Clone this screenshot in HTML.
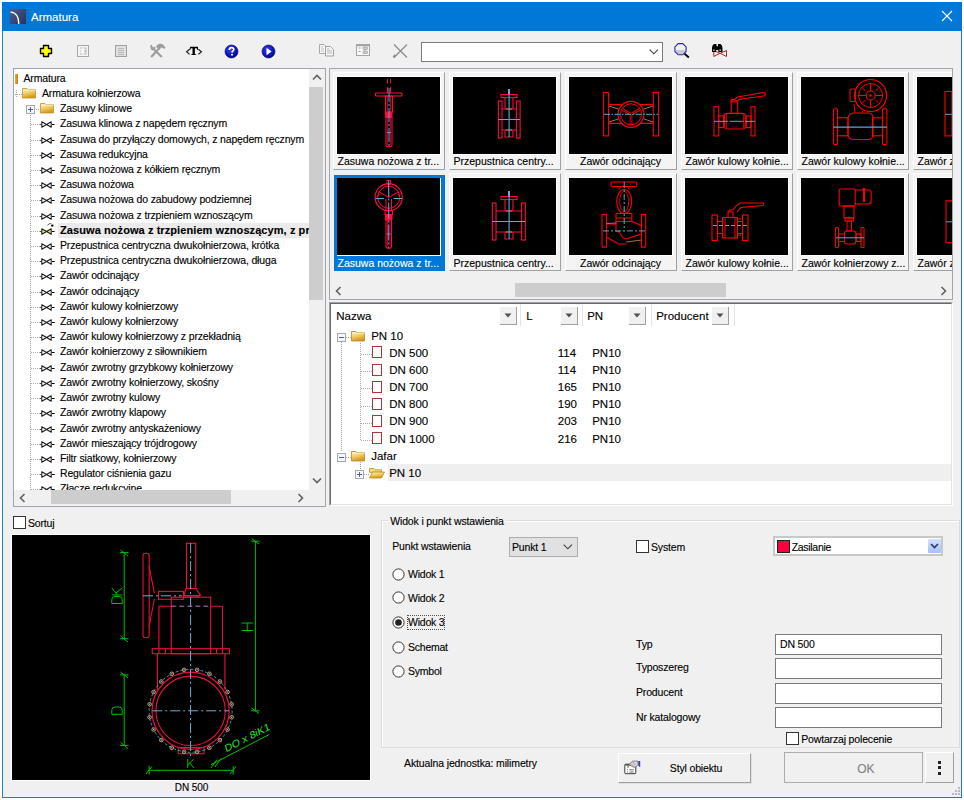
<!DOCTYPE html>
<html><head><meta charset="utf-8">
<style>
*{margin:0;padding:0;box-sizing:border-box}
html,body{width:964px;height:800px;overflow:hidden;background:#fff}
body{position:relative;font-family:"Liberation Sans",sans-serif;font-size:10.5px;color:#000}
.a{position:absolute}
svg{position:absolute;overflow:visible}
.t{position:absolute;white-space:nowrap;line-height:14px;-webkit-text-stroke:0.12px currentColor}
.box{position:absolute;background:#fff;border:1px solid #a0a4ac}
.g{background:#f0f0f0}
.th{position:absolute;background:#cdcdcd}
.sx{transform:scaleX(0.92);transform-origin:0 0}
</style></head><body>

<div class="a" style="left:2px;top:2px;width:960px;height:796px;background:#f0f0f0;border:1px solid #1c7bd4"></div>
<div class="a" style="left:2px;top:2px;width:960px;height:29px;background:#0078d7"></div>
<div class="a" style="left:10px;top:9px;width:16px;height:15px;background:linear-gradient(135deg,#4e5d8e,#27335f)"></div>
<svg style="left:10px;top:9px" width="16" height="15"><path d="M0.5 3.2 Q8.5 3.5 8.8 15" stroke="#fff" stroke-width="1.3" fill="none"/></svg>
<div class="t" style="left:31.0px;top:10px;font-size:11.5px;letter-spacing:0px;color:#fff">Armatura</div>
<svg style="left:941px;top:10px" width="12" height="12"><path d="M1 1L11 11M11 1L1 11" stroke="#fff" stroke-width="1.1"/></svg>
<svg style="left:39px;top:44px" width="14" height="14"><path d="M4.5 1.5h5v3h3v5h-3v3h-5v-3h-3v-5h3z" fill="#ffff00" stroke="#000" stroke-width="1.4" stroke-linejoin="round"/></svg>
<svg style="left:77px;top:45px" width="13" height="13"><rect x="0.5" y="0.5" width="11" height="11" fill="#f4f4f4" stroke="#a8a8a8"/><path d="M3 3h2M3 6h1M3 9h2M6.5 3h2.5v6h-2.5M8 5v2" stroke="#b0b0b0" stroke-width="0.9" fill="none"/></svg>
<svg style="left:115px;top:45px" width="13" height="13"><rect x="0.5" y="0.5" width="11" height="11" fill="#e0e0e0" stroke="#a0a0a0"/><path d="M3 3.5h6M3 5.5h6M3 7.5h6M3 9.5h6" stroke="#b8b8b8" stroke-width="1" fill="none"/></svg>
<svg style="left:0;top:0" width="1" height="1"><g fill="none" stroke="#9c9c9c" stroke-width="2.1" stroke-linecap="butt"><path d="M153 48.5L161.8 57"/><path d="M158.8 48.6L151.2 57"/></g><path d="M150.2 46.8q0.2-1.6 1.6-2.2l0.5 2 1.4 0.9 1.6-1q0.6 2.2-1 3.3-1.5 0.8-3 0.1z" fill="#9c9c9c"/><path d="M155.8 46.6l2.8-2.6q2.6-0.9 4.6 0.8l2.3 2.8-1.3 1.4-2.6-1.8-2.2 2.5z" fill="#9c9c9c"/></svg>
<svg style="left:0;top:0" width="1" height="1"><path d="M189.6 49.2L186.6 51.8L189.6 54.4M198.4 49.2L201.4 51.8L198.4 54.4" fill="none" stroke="#222" stroke-width="1.25"/><path d="M190.2 46.7h7.8v3.1h-0.9l-0.6-1.6h-1.6v5.7l1.3 0.5v0.7h-5v-0.7l1.3-0.5v-5.7h-1.6l-0.6 1.6h-0.9z" fill="#000"/></svg>
<svg style="left:224px;top:44px" width="15" height="15"><defs><radialGradient id="bg1" cx="0.4" cy="0.35" r="0.7"><stop offset="0" stop-color="#2f3dff"/><stop offset="1" stop-color="#00008a"/></radialGradient></defs><circle cx="7.5" cy="7.5" r="6.5" fill="url(#bg1)" stroke="#000060" stroke-width="0.6"/><path d="M5.3 6 Q5.3 3.6 7.6 3.6 Q9.8 3.6 9.8 5.6 Q9.8 6.8 8.3 7.4 L8.1 8.7" stroke="#fff" stroke-width="1.6" fill="none"/><circle cx="8" cy="10.8" r="1" fill="#fff"/></svg>
<svg style="left:261px;top:44px" width="15" height="15"><circle cx="7.5" cy="7.5" r="6.5" fill="url(#bg1)" stroke="#000060" stroke-width="0.6"/><path d="M5.5 3.8L10.6 7.5L5.5 11.2z" fill="#fff"/></svg>
<svg style="left:0;top:0" width="1" height="1"><path d="M319.5 44.5h4.5l2 2v7h-6.5z" fill="#f6f6f6" stroke="#a8a8a8"/><path d="M321 47h2M321 49h3M321 51h3" stroke="#c4c4c4"/><path d="M325.5 46.5h5l3 3v6.5h-8z" fill="#f6f6f6" stroke="#a0a0a0"/><path d="M327 49h2.5M327 51h5M327 53h5" stroke="#b8b8b8"/></svg>
<svg style="left:0;top:0" width="1" height="1"><rect x="356.5" y="44.5" width="13" height="11" fill="#f8f8f8" stroke="#a4a4a4"/><path d="M356.5 45.5h13" stroke="#a4a4a4" stroke-width="1.5"/><path d="M358.5 48h2M358.5 51.5h2" stroke="#a0a0a0"/><rect x="363" y="47" width="4.5" height="2.5" rx="0.8" fill="#cfcfcf" stroke="#9c9c9c" stroke-width="0.8"/><rect x="363" y="51" width="4.5" height="2.5" rx="0.8" fill="#cfcfcf" stroke="#9c9c9c" stroke-width="0.8"/></svg>
<svg style="left:392px;top:43px" width="17" height="16"><path d="M2 1.5L15 14.5M15 1.5L3 13.5" stroke="#8c8c8c" stroke-width="1.3" fill="none"/><path d="M1.5 14.5l2-2.5" stroke="#8c8c8c" stroke-width="2.2"/></svg>
<div class="a" style="left:421px;top:42px;width:242px;height:20px;background:#fff;border:1px solid #7a7a7a"></div>
<svg style="left:649px;top:49px" width="10" height="6"><path d="M0.7 0.7L4.8 4.8L8.9 0.7" stroke="#404040" stroke-width="1.1" fill="none"/></svg>
<svg style="left:0;top:0" width="1" height="1"><path d="M676 50h9.5v1.2q-1 3.7-4.7 3.7t-4.8-3.7z" fill="#c8c8dc"/><path d="M678.2 43.6h4.6l3.3 3.3v4.6l-3.3 3.3h-4.6l-3.3-3.3v-4.6z" fill="none" stroke="#2a2aa8" stroke-width="1.1"/><path d="M684.6 53.8L688.8 57.6" stroke="#000" stroke-width="2"/></svg>
<svg style="left:0;top:0" width="1" height="1"><path d="M713.8 50.5V56.5L720 53.3ZM726.5 50.5V56.5L720.3 53.3Z" fill="none" stroke="#b02424" stroke-width="1"/><path d="M712 48q0-3 2-4h2.5v2.2h1.5v-2.2h2.5q2 1 2 4v4h-4.2v-2h-2.2v2h-4.1z" fill="#000"/><path d="M713.2 49.5h1.3v1.2h-1.3zM719.5 49.5h1.3v1.2h-1.3z" fill="#fff"/></svg>
<div class="box" style="left:13px;top:68px;width:313px;height:439px"></div>
<div class="a" style="left:14px;top:69px;width:295px;height:421px;overflow:hidden">
<svg style="left:0;top:0" width="0" height="0"><defs><linearGradient id="fg" x1="0" y1="0" x2="0.35" y2="1"><stop offset="0" stop-color="#fff4c0"/><stop offset="0.5" stop-color="#f4d070"/><stop offset="1" stop-color="#d49a1c"/></linearGradient></defs></svg>
<div class="a" style="left:16.0px;top:44.0px;width:1px;height:382.0px;background:repeating-linear-gradient(#a8a8a8 0 1px,transparent 1px 2px)"></div>
<div class="a" style="left:1px;top:5px;width:3px;height:10px;background:linear-gradient(90deg,#e8b040,#c08010)"></div>
<div class="t" style="left:9.5px;top:2px;font-size:10.5px;letter-spacing:-0.16px;">Armatura</div>
<div class="a" style="left:1.0px;top:25.0px;width:7.0px;height:1px;background:repeating-linear-gradient(90deg,#a8a8a8 0 1px,transparent 1px 2px)"></div>
<div class="a" style="left:2.0px;top:21.0px;width:1px;height:8.0px;background:repeating-linear-gradient(#a8a8a8 0 1px,transparent 1px 2px)"></div>
<svg style="left:8.0px;top:18.0px" width="15" height="12"><path d="M0.5 1.5h4.5l1.2 1.3h7.3v8.2h-13z" fill="url(#fg)" stroke="#c09030" stroke-width="0.8"/><path d="M1 3.3h12.5" stroke="#fff8d8" stroke-width="0.8"/></svg>
<div class="t" style="left:28.0px;top:17px;font-size:10.5px;letter-spacing:-0.16px;">Armatura kołnierzowa</div>
<div class="a" style="left:20.0px;top:40.0px;width:6.0px;height:1px;background:repeating-linear-gradient(90deg,#a8a8a8 0 1px,transparent 1px 2px)"></div>
<svg style="left:26.0px;top:33.0px" width="15" height="12"><path d="M0.5 1.5h4.5l1.2 1.3h7.3v8.2h-13z" fill="url(#fg)" stroke="#c09030" stroke-width="0.8"/><path d="M1 3.3h12.5" stroke="#fff8d8" stroke-width="0.8"/></svg>
<svg style="left:12.0px;top:36.0px" width="9" height="9"><rect x="0.5" y="0.5" width="8" height="8" fill="#f6f6fa" stroke="#a8aab0"/><path d="M2 4.5h5" stroke="#4a5fb0" stroke-width="1"/><path d="M4.5 2v5" stroke="#4a5fb0" stroke-width="1"/></svg>
<div class="t" style="left:46.0px;top:32px;font-size:10.5px;letter-spacing:-0.16px;">Zasuwy klinowe</div>
<div class="a" style="left:17.0px;top:55.0px;width:9.0px;height:1px;background:repeating-linear-gradient(90deg,#a8a8a8 0 1px,transparent 1px 2px)"></div>
<svg style="left:26.0px;top:52.0px" width="16" height="8"><path d="M1.8 0.8L6.6 3.5L1.8 6.2z M11.2 0.8L6.6 3.5L11.2 6.2z" fill="#fff" stroke="#1a1a1a" stroke-width="1.05" stroke-linejoin="round"/><path d="M0.3 3.5h1M12 3.5h2.6" stroke="#000" stroke-width="1"/></svg>
<div class="t" style="left:46.0px;top:47px;font-size:10.5px;letter-spacing:-0.16px;">Zasuwa klinowa z napędem ręcznym</div>
<div class="a" style="left:17.0px;top:71.0px;width:9.0px;height:1px;background:repeating-linear-gradient(90deg,#a8a8a8 0 1px,transparent 1px 2px)"></div>
<svg style="left:26.0px;top:68.0px" width="16" height="8"><path d="M1.8 0.8L6.6 3.5L1.8 6.2z M11.2 0.8L6.6 3.5L11.2 6.2z" fill="#fff" stroke="#1a1a1a" stroke-width="1.05" stroke-linejoin="round"/><path d="M0.3 3.5h1M12 3.5h2.6" stroke="#000" stroke-width="1"/></svg>
<div class="t" style="left:46.0px;top:63px;font-size:10.5px;letter-spacing:-0.16px;">Zasuwa do przyłączy domowych, z napędem ręcznym</div>
<div class="a" style="left:17.0px;top:86.0px;width:9.0px;height:1px;background:repeating-linear-gradient(90deg,#a8a8a8 0 1px,transparent 1px 2px)"></div>
<svg style="left:26.0px;top:83.0px" width="16" height="8"><path d="M1.8 0.8L6.6 3.5L1.8 6.2z M11.2 0.8L6.6 3.5L11.2 6.2z" fill="#fff" stroke="#1a1a1a" stroke-width="1.05" stroke-linejoin="round"/><path d="M0.3 3.5h1M12 3.5h2.6" stroke="#000" stroke-width="1"/></svg>
<div class="t" style="left:46.0px;top:78px;font-size:10.5px;letter-spacing:-0.16px;">Zasuwa redukcyjna</div>
<div class="a" style="left:17.0px;top:101.0px;width:9.0px;height:1px;background:repeating-linear-gradient(90deg,#a8a8a8 0 1px,transparent 1px 2px)"></div>
<svg style="left:26.0px;top:98.0px" width="16" height="8"><path d="M1.8 0.8L6.6 3.5L1.8 6.2z M11.2 0.8L6.6 3.5L11.2 6.2z" fill="#fff" stroke="#1a1a1a" stroke-width="1.05" stroke-linejoin="round"/><path d="M0.3 3.5h1M12 3.5h2.6" stroke="#000" stroke-width="1"/></svg>
<div class="t" style="left:46.0px;top:93px;font-size:10.5px;letter-spacing:-0.16px;">Zasuwa nożowa z kółkiem ręcznym</div>
<div class="a" style="left:17.0px;top:116.0px;width:9.0px;height:1px;background:repeating-linear-gradient(90deg,#a8a8a8 0 1px,transparent 1px 2px)"></div>
<svg style="left:26.0px;top:113.0px" width="16" height="8"><path d="M1.8 0.8L6.6 3.5L1.8 6.2z M11.2 0.8L6.6 3.5L11.2 6.2z" fill="#fff" stroke="#1a1a1a" stroke-width="1.05" stroke-linejoin="round"/><path d="M0.3 3.5h1M12 3.5h2.6" stroke="#000" stroke-width="1"/></svg>
<div class="t" style="left:46.0px;top:108px;font-size:10.5px;letter-spacing:-0.16px;">Zasuwa nożowa</div>
<div class="a" style="left:17.0px;top:131.0px;width:9.0px;height:1px;background:repeating-linear-gradient(90deg,#a8a8a8 0 1px,transparent 1px 2px)"></div>
<svg style="left:26.0px;top:128.0px" width="16" height="8"><path d="M1.8 0.8L6.6 3.5L1.8 6.2z M11.2 0.8L6.6 3.5L11.2 6.2z" fill="#fff" stroke="#1a1a1a" stroke-width="1.05" stroke-linejoin="round"/><path d="M0.3 3.5h1M12 3.5h2.6" stroke="#000" stroke-width="1"/></svg>
<div class="t" style="left:46.0px;top:123px;font-size:10.5px;letter-spacing:-0.16px;">Zasuwa nożowa do zabudowy podziemnej</div>
<div class="a" style="left:17.0px;top:147.0px;width:9.0px;height:1px;background:repeating-linear-gradient(90deg,#a8a8a8 0 1px,transparent 1px 2px)"></div>
<svg style="left:26.0px;top:144.0px" width="16" height="8"><path d="M1.8 0.8L6.6 3.5L1.8 6.2z M11.2 0.8L6.6 3.5L11.2 6.2z" fill="#fff" stroke="#1a1a1a" stroke-width="1.05" stroke-linejoin="round"/><path d="M0.3 3.5h1M12 3.5h2.6" stroke="#000" stroke-width="1"/></svg>
<div class="t" style="left:46.0px;top:139px;font-size:10.5px;letter-spacing:-0.16px;">Zasuwa nożowa z trzpieniem wznoszącym</div>
<div class="a" style="left:17.0px;top:162.0px;width:9.0px;height:1px;background:repeating-linear-gradient(90deg,#a8a8a8 0 1px,transparent 1px 2px)"></div>
<div class="a" style="left:44.0px;top:154px;width:260px;height:15px;background:#ebebeb"></div>
<svg style="left:26.0px;top:159.0px" width="16" height="8"><path d="M1.8 0.8L6.6 3.5L1.8 6.2z M11.2 0.8L6.6 3.5L11.2 6.2z" fill="#f0f040" stroke="#1a1a1a" stroke-width="1.05" stroke-linejoin="round"/><path d="M0.3 3.5h1M12 3.5h2.6" stroke="#000" stroke-width="1"/></svg><svg style="left:31.0px;top:153.0px" width="10" height="8"><path d="M2.5 3.5Q4 0.6 6.5 1.8" stroke="#404040" stroke-width="0.9" fill="none"/><circle cx="7.3" cy="3.6" r="1.2" fill="#000"/></svg>
<div class="t" style="left:46.0px;top:154px;font-size:11px;letter-spacing:0.08px;font-weight:bold">Zasuwa nożowa z trzpieniem wznoszącym, z przekładnią</div>
<div class="a" style="left:17.0px;top:177.0px;width:9.0px;height:1px;background:repeating-linear-gradient(90deg,#a8a8a8 0 1px,transparent 1px 2px)"></div>
<svg style="left:26.0px;top:174.0px" width="16" height="8"><path d="M1.8 0.8L6.6 3.5L1.8 6.2z M11.2 0.8L6.6 3.5L11.2 6.2z" fill="#fff" stroke="#1a1a1a" stroke-width="1.05" stroke-linejoin="round"/><path d="M0.3 3.5h1M12 3.5h2.6" stroke="#000" stroke-width="1"/></svg>
<div class="t" style="left:46.0px;top:169px;font-size:10.5px;letter-spacing:-0.16px;">Przepustnica centryczna dwukołnierzowa, krótka</div>
<div class="a" style="left:17.0px;top:192.0px;width:9.0px;height:1px;background:repeating-linear-gradient(90deg,#a8a8a8 0 1px,transparent 1px 2px)"></div>
<svg style="left:26.0px;top:189.0px" width="16" height="8"><path d="M1.8 0.8L6.6 3.5L1.8 6.2z M11.2 0.8L6.6 3.5L11.2 6.2z" fill="#fff" stroke="#1a1a1a" stroke-width="1.05" stroke-linejoin="round"/><path d="M0.3 3.5h1M12 3.5h2.6" stroke="#000" stroke-width="1"/></svg>
<div class="t" style="left:46.0px;top:184px;font-size:10.5px;letter-spacing:-0.16px;">Przepustnica centryczna dwukołnierzowa, długa</div>
<div class="a" style="left:17.0px;top:207.0px;width:9.0px;height:1px;background:repeating-linear-gradient(90deg,#a8a8a8 0 1px,transparent 1px 2px)"></div>
<svg style="left:26.0px;top:204.0px" width="16" height="8"><path d="M1.8 0.8L6.6 3.5L1.8 6.2z M11.2 0.8L6.6 3.5L11.2 6.2z" fill="#fff" stroke="#1a1a1a" stroke-width="1.05" stroke-linejoin="round"/><path d="M0.3 3.5h1M12 3.5h2.6" stroke="#000" stroke-width="1"/></svg>
<div class="t" style="left:46.0px;top:199px;font-size:10.5px;letter-spacing:-0.16px;">Zawór odcinający</div>
<div class="a" style="left:17.0px;top:223.0px;width:9.0px;height:1px;background:repeating-linear-gradient(90deg,#a8a8a8 0 1px,transparent 1px 2px)"></div>
<svg style="left:26.0px;top:220.0px" width="16" height="8"><path d="M1.8 0.8L6.6 3.5L1.8 6.2z M11.2 0.8L6.6 3.5L11.2 6.2z" fill="#fff" stroke="#1a1a1a" stroke-width="1.05" stroke-linejoin="round"/><path d="M0.3 3.5h1M12 3.5h2.6" stroke="#000" stroke-width="1"/></svg>
<div class="t" style="left:46.0px;top:215px;font-size:10.5px;letter-spacing:-0.16px;">Zawór odcinający</div>
<div class="a" style="left:17.0px;top:238.0px;width:9.0px;height:1px;background:repeating-linear-gradient(90deg,#a8a8a8 0 1px,transparent 1px 2px)"></div>
<svg style="left:26.0px;top:235.0px" width="16" height="8"><path d="M1.8 0.8L6.6 3.5L1.8 6.2z M11.2 0.8L6.6 3.5L11.2 6.2z" fill="#fff" stroke="#1a1a1a" stroke-width="1.05" stroke-linejoin="round"/><path d="M0.3 3.5h1M12 3.5h2.6" stroke="#000" stroke-width="1"/></svg>
<div class="t" style="left:46.0px;top:230px;font-size:10.5px;letter-spacing:-0.16px;">Zawór kulowy kołnierzowy</div>
<div class="a" style="left:17.0px;top:253.0px;width:9.0px;height:1px;background:repeating-linear-gradient(90deg,#a8a8a8 0 1px,transparent 1px 2px)"></div>
<svg style="left:26.0px;top:250.0px" width="16" height="8"><path d="M1.8 0.8L6.6 3.5L1.8 6.2z M11.2 0.8L6.6 3.5L11.2 6.2z" fill="#fff" stroke="#1a1a1a" stroke-width="1.05" stroke-linejoin="round"/><path d="M0.3 3.5h1M12 3.5h2.6" stroke="#000" stroke-width="1"/></svg>
<div class="t" style="left:46.0px;top:245px;font-size:10.5px;letter-spacing:-0.16px;">Zawór kulowy kołnierzowy</div>
<div class="a" style="left:17.0px;top:268.0px;width:9.0px;height:1px;background:repeating-linear-gradient(90deg,#a8a8a8 0 1px,transparent 1px 2px)"></div>
<svg style="left:26.0px;top:265.0px" width="16" height="8"><path d="M1.8 0.8L6.6 3.5L1.8 6.2z M11.2 0.8L6.6 3.5L11.2 6.2z" fill="#fff" stroke="#1a1a1a" stroke-width="1.05" stroke-linejoin="round"/><path d="M0.3 3.5h1M12 3.5h2.6" stroke="#000" stroke-width="1"/></svg>
<div class="t" style="left:46.0px;top:260px;font-size:10.5px;letter-spacing:-0.16px;">Zawór kulowy kołnierzowy z przekładnią</div>
<div class="a" style="left:17.0px;top:283.0px;width:9.0px;height:1px;background:repeating-linear-gradient(90deg,#a8a8a8 0 1px,transparent 1px 2px)"></div>
<svg style="left:26.0px;top:280.0px" width="16" height="8"><path d="M1.8 0.8L6.6 3.5L1.8 6.2z M11.2 0.8L6.6 3.5L11.2 6.2z" fill="#fff" stroke="#1a1a1a" stroke-width="1.05" stroke-linejoin="round"/><path d="M0.3 3.5h1M12 3.5h2.6" stroke="#000" stroke-width="1"/></svg>
<div class="t" style="left:46.0px;top:275px;font-size:10.5px;letter-spacing:-0.16px;">Zawór kołnierzowy z siłownikiem</div>
<div class="a" style="left:17.0px;top:299.0px;width:9.0px;height:1px;background:repeating-linear-gradient(90deg,#a8a8a8 0 1px,transparent 1px 2px)"></div>
<svg style="left:26.0px;top:296.0px" width="16" height="8"><path d="M1.8 0.8L6.6 3.5L1.8 6.2z M11.2 0.8L6.6 3.5L11.2 6.2z" fill="#fff" stroke="#1a1a1a" stroke-width="1.05" stroke-linejoin="round"/><path d="M0.3 3.5h1M12 3.5h2.6" stroke="#000" stroke-width="1"/></svg>
<div class="t" style="left:46.0px;top:291px;font-size:10.5px;letter-spacing:-0.16px;">Zawór zwrotny grzybkowy kołnierzowy</div>
<div class="a" style="left:17.0px;top:314.0px;width:9.0px;height:1px;background:repeating-linear-gradient(90deg,#a8a8a8 0 1px,transparent 1px 2px)"></div>
<svg style="left:26.0px;top:311.0px" width="16" height="8"><path d="M1.8 0.8L6.6 3.5L1.8 6.2z M11.2 0.8L6.6 3.5L11.2 6.2z" fill="#fff" stroke="#1a1a1a" stroke-width="1.05" stroke-linejoin="round"/><path d="M0.3 3.5h1M12 3.5h2.6" stroke="#000" stroke-width="1"/></svg>
<div class="t" style="left:46.0px;top:306px;font-size:10.5px;letter-spacing:-0.16px;">Zawór zwrotny kołnierzowy, skośny</div>
<div class="a" style="left:17.0px;top:329.0px;width:9.0px;height:1px;background:repeating-linear-gradient(90deg,#a8a8a8 0 1px,transparent 1px 2px)"></div>
<svg style="left:26.0px;top:326.0px" width="16" height="8"><path d="M1.8 0.8L6.6 3.5L1.8 6.2z M11.2 0.8L6.6 3.5L11.2 6.2z" fill="#fff" stroke="#1a1a1a" stroke-width="1.05" stroke-linejoin="round"/><path d="M0.3 3.5h1M12 3.5h2.6" stroke="#000" stroke-width="1"/></svg>
<div class="t" style="left:46.0px;top:321px;font-size:10.5px;letter-spacing:-0.16px;">Zawór zwrotny kulowy</div>
<div class="a" style="left:17.0px;top:344.0px;width:9.0px;height:1px;background:repeating-linear-gradient(90deg,#a8a8a8 0 1px,transparent 1px 2px)"></div>
<svg style="left:26.0px;top:341.0px" width="16" height="8"><path d="M1.8 0.8L6.6 3.5L1.8 6.2z M11.2 0.8L6.6 3.5L11.2 6.2z" fill="#fff" stroke="#1a1a1a" stroke-width="1.05" stroke-linejoin="round"/><path d="M0.3 3.5h1M12 3.5h2.6" stroke="#000" stroke-width="1"/></svg>
<div class="t" style="left:46.0px;top:336px;font-size:10.5px;letter-spacing:-0.16px;">Zawór zwrotny klapowy</div>
<div class="a" style="left:17.0px;top:360.0px;width:9.0px;height:1px;background:repeating-linear-gradient(90deg,#a8a8a8 0 1px,transparent 1px 2px)"></div>
<svg style="left:26.0px;top:357.0px" width="16" height="8"><path d="M1.8 0.8L6.6 3.5L1.8 6.2z M11.2 0.8L6.6 3.5L11.2 6.2z" fill="#fff" stroke="#1a1a1a" stroke-width="1.05" stroke-linejoin="round"/><path d="M0.3 3.5h1M12 3.5h2.6" stroke="#000" stroke-width="1"/></svg>
<div class="t" style="left:46.0px;top:352px;font-size:10.5px;letter-spacing:-0.16px;">Zawór zwrotny antyskażeniowy</div>
<div class="a" style="left:17.0px;top:375.0px;width:9.0px;height:1px;background:repeating-linear-gradient(90deg,#a8a8a8 0 1px,transparent 1px 2px)"></div>
<svg style="left:26.0px;top:372.0px" width="16" height="8"><path d="M1.8 0.8L6.6 3.5L1.8 6.2z M11.2 0.8L6.6 3.5L11.2 6.2z" fill="#fff" stroke="#1a1a1a" stroke-width="1.05" stroke-linejoin="round"/><path d="M0.3 3.5h1M12 3.5h2.6" stroke="#000" stroke-width="1"/></svg>
<div class="t" style="left:46.0px;top:367px;font-size:10.5px;letter-spacing:-0.16px;">Zawór mieszający trójdrogowy</div>
<div class="a" style="left:17.0px;top:390.0px;width:9.0px;height:1px;background:repeating-linear-gradient(90deg,#a8a8a8 0 1px,transparent 1px 2px)"></div>
<svg style="left:26.0px;top:387.0px" width="16" height="8"><path d="M1.8 0.8L6.6 3.5L1.8 6.2z M11.2 0.8L6.6 3.5L11.2 6.2z" fill="#fff" stroke="#1a1a1a" stroke-width="1.05" stroke-linejoin="round"/><path d="M0.3 3.5h1M12 3.5h2.6" stroke="#000" stroke-width="1"/></svg>
<div class="t" style="left:46.0px;top:382px;font-size:10.5px;letter-spacing:-0.16px;">Filtr siatkowy, kołnierzowy</div>
<div class="a" style="left:17.0px;top:405.0px;width:9.0px;height:1px;background:repeating-linear-gradient(90deg,#a8a8a8 0 1px,transparent 1px 2px)"></div>
<svg style="left:26.0px;top:402.0px" width="16" height="8"><path d="M1.8 0.8L6.6 3.5L1.8 6.2z M11.2 0.8L6.6 3.5L11.2 6.2z" fill="#fff" stroke="#1a1a1a" stroke-width="1.05" stroke-linejoin="round"/><path d="M0.3 3.5h1M12 3.5h2.6" stroke="#000" stroke-width="1"/></svg>
<div class="t" style="left:46.0px;top:397px;font-size:10.5px;letter-spacing:-0.16px;">Regulator ciśnienia gazu</div>
<div class="a" style="left:17.0px;top:420.0px;width:9.0px;height:1px;background:repeating-linear-gradient(90deg,#a8a8a8 0 1px,transparent 1px 2px)"></div>
<svg style="left:26.0px;top:417.0px" width="16" height="8"><path d="M1.8 0.8L6.6 3.5L1.8 6.2z M11.2 0.8L6.6 3.5L11.2 6.2z" fill="#fff" stroke="#1a1a1a" stroke-width="1.05" stroke-linejoin="round"/><path d="M0.3 3.5h1M12 3.5h2.6" stroke="#000" stroke-width="1"/></svg>
<div class="t" style="left:46.0px;top:412px;font-size:10.5px;letter-spacing:-0.16px;">Złącze redukcyjne</div>
</div>
<div class="a g" style="left:309px;top:69px;width:16px;height:437px"></div>
<div class="th" style="left:309px;top:87px;width:14px;height:213px"></div>
<svg style="left:312px;top:74px" width="10" height="7"><path d="M1 5.5L5 1.5L9 5.5" stroke="#606060" stroke-width="1.6" fill="none"/></svg>
<svg style="left:312px;top:477px" width="10" height="7"><path d="M1 1.5L5 5.5L9 1.5" stroke="#606060" stroke-width="1.6" fill="none"/></svg>
<div class="a g" style="left:14px;top:490px;width:295px;height:16px"></div>
<div class="th" style="left:51px;top:490px;width:180px;height:14px"></div>
<svg style="left:19px;top:493px" width="7" height="10"><path d="M5.5 1L1.5 5L5.5 9" stroke="#606060" stroke-width="1.6" fill="none"/></svg>
<svg style="left:297px;top:493px" width="7" height="10"><path d="M1.5 1L5.5 5L1.5 9" stroke="#606060" stroke-width="1.6" fill="none"/></svg>
<div class="box" style="left:329px;top:68px;width:624px;height:232px"></div>
<div class="a" style="left:330px;top:69px;width:622px;height:214px;overflow:hidden">
<div class="a" style="left:0;top:0;width:622px;height:214px;background:#f0f0f0"></div>
<div class="a" style="left:3px;top:3px;width:112px;height:98px;border-top:1px solid #fff;border-left:1px solid #fff;border-right:1px solid #a0a0a0;border-bottom:1px solid #a0a0a0;background:#f4f4f4"></div>
<div class="a" style="left:6px;top:7px;width:105px;height:79px;background:#fff"></div>
<svg style="left:7px;top:8px;background:#000;overflow:hidden" width="103" height="77"><rect x="38.5" y="16" width="26.5" height="3" rx="0.8" fill="none" stroke="#ff0a3c" stroke-width="1.1"/>
<rect x="48.5" y="19" width="7" height="16" fill="none" stroke="#ff0a3c" stroke-width="1.1"/>
<path d="M50.3 19v16M53.7 19v16" stroke="#ff0a3c" stroke-width="0.8"/>
<rect x="48" y="35" width="7.5" height="5.5" fill="#ff0a3c"/>
<path d="M49 40.5h6v27.5q0 1.8-3 1.8t-3-1.8z" fill="none" stroke="#ff0a3c" stroke-width="1.1"/>
<path d="M50.6 41v27M53.4 41v27" stroke="#ff0a3c" stroke-width="0.7"/>
<path d="M50.5 2v4.5M53.5 2v4.5M50.5 10v6M53.5 10v6" stroke="#ff0a3c" stroke-width="1"/>
<path d="M52 11V69" stroke="#5aa8d8" stroke-width="1" stroke-dasharray="14 2 2 2"/>
<path d="M50 55.5h4" stroke="#5aa8d8" stroke-width="0.9"/></svg>
<div class="t" style="left:7.5px;top:85px;font-size:10.5px;letter-spacing:0px;color:#000">Zasuwa nożowa z tr...</div>
<div class="a" style="left:119px;top:3px;width:112px;height:98px;border-top:1px solid #fff;border-left:1px solid #fff;border-right:1px solid #a0a0a0;border-bottom:1px solid #a0a0a0;background:#f4f4f4"></div>
<div class="a" style="left:122px;top:7px;width:105px;height:79px;background:#fff"></div>
<svg style="left:123px;top:8px;background:#000;overflow:hidden" width="103" height="77"><rect x="45.3" y="24" width="3.7" height="37" fill="none" stroke="#ff0a3c" stroke-width="1.1"/>
<rect x="63.4" y="24" width="3.7" height="37" fill="none" stroke="#ff0a3c" stroke-width="1.1"/>
<path d="M49.0 32H63.4M49.0 53H63.4" stroke="#ff0a3c" stroke-width="1.1"/>
<path d="M52 20.5V32M60 20.5V32M52 53v7h8v-7" fill="none" stroke="#ff0a3c" stroke-width="1.1"/>
<rect x="48" y="17.5" width="16" height="3" fill="none" stroke="#ff0a3c" stroke-width="1.1"/>
<path d="M56 12v5.5" stroke="#e080c0" stroke-width="2"/>
<path d="M53 32h6M53 53h6" stroke="#c89050" stroke-width="1"/>
<path d="M56.1 12V60M45.3 42.5H67.1" stroke="#5aa8d8" stroke-width="1.1"/></svg>
<div class="t" style="left:123.5px;top:85px;font-size:10.5px;letter-spacing:0px;color:#000">Przepustnica centry...</div>
<div class="a" style="left:235px;top:3px;width:112px;height:98px;border-top:1px solid #fff;border-left:1px solid #fff;border-right:1px solid #a0a0a0;border-bottom:1px solid #a0a0a0;background:#f4f4f4"></div>
<div class="a" style="left:238px;top:7px;width:105px;height:79px;background:#fff"></div>
<svg style="left:239px;top:8px;background:#000;overflow:hidden" width="103" height="77"><rect x="34.6" y="15.5" width="5" height="43.4" fill="none" stroke="#ff0000" stroke-width="1.1"/>
<rect x="84.3" y="15.5" width="5.2" height="43.4" fill="none" stroke="#ff0000" stroke-width="1.1"/>
<path d="M39.6 27.6H84.3M39.6 46.4H84.3" stroke="#ff0000" stroke-width="1.1"/>
<path d="M40 29l12 4M40 45l12-4M84 29l-12 4M84 45l-12-4" stroke="#c89050" stroke-width="0.8"/>
<circle cx="62" cy="37.3" r="13" fill="#000" stroke="#ff0000" stroke-width="1.2"/>
<circle cx="62" cy="37.3" r="10.5" fill="none" stroke="#ff0000" stroke-width="1"/>
<path d="M62 37.3V47M62 37.3L53.5 32.5M62 37.3L70.5 32.5" stroke="#ff0000" stroke-width="2.6"/>
<path d="M62 37.3V47M62 37.3L53.5 32.5M62 37.3L70.5 32.5" stroke="#000" stroke-width="0.9"/>
<path d="M35 37.3H89" stroke="#5aa8d8" stroke-width="1" stroke-dasharray="6 1.5 1.5 1.5"/></svg>
<div class="t" style="left:238.5px;top:85px;font-size:10.5px;letter-spacing:-0.05px;width:104px;text-align:center;color:#000">Zawór odcinający</div>
<div class="a" style="left:351px;top:3px;width:112px;height:98px;border-top:1px solid #fff;border-left:1px solid #fff;border-right:1px solid #a0a0a0;border-bottom:1px solid #a0a0a0;background:#f4f4f4"></div>
<div class="a" style="left:354px;top:7px;width:105px;height:79px;background:#fff"></div>
<svg style="left:355px;top:8px;background:#000;overflow:hidden" width="103" height="77"><rect x="29" y="29.7" width="4.7" height="29.2" fill="none" stroke="#ff0000" stroke-width="1.1"/>
<rect x="66" y="29.7" width="4" height="29.2" fill="none" stroke="#ff0000" stroke-width="1.1"/>
<rect x="33.7" y="38.9" width="5" height="11.6" fill="none" stroke="#ff0000" stroke-width="1.1"/>
<rect x="61.3" y="38.9" width="4.7" height="11.6" fill="none" stroke="#ff0000" stroke-width="1.1"/>
<rect x="39.6" y="36.4" width="20.6" height="15.6" rx="2.5" fill="none" stroke="#ff0000" stroke-width="1.1"/>
<path d="M41.5 37v14M58.5 37v14" stroke="#ff0000" stroke-width="0.7"/>
<rect x="46.2" y="23.9" width="6.5" height="12.5" fill="none" stroke="#ff0000" stroke-width="1.1"/>
<path d="M46.5 22.5h3l3-2.5 26-4.5q2 0 2 1.5t-2 2l-25 3.5l-1.5 2.5h-5.5q-1-1.5 0-2.5z" fill="none" stroke="#ff0000" stroke-width="1.1"/>
<path d="M29 44.3H70" stroke="#5aa8d8" stroke-width="1" stroke-dasharray="14 1.5"/></svg>
<div class="t" style="left:355.5px;top:85px;font-size:10.5px;letter-spacing:0px;color:#000">Zawór kulowy kołnie...</div>
<div class="a" style="left:467px;top:3px;width:112px;height:98px;border-top:1px solid #fff;border-left:1px solid #fff;border-right:1px solid #a0a0a0;border-bottom:1px solid #a0a0a0;background:#f4f4f4"></div>
<div class="a" style="left:470px;top:7px;width:105px;height:79px;background:#fff"></div>
<svg style="left:471px;top:8px;background:#000;overflow:hidden" width="103" height="77"><rect x="32.5" y="31.8" width="4" height="35.8" rx="1" fill="none" stroke="#ff0000" stroke-width="1.1"/>
<rect x="81.5" y="31.8" width="4.4" height="35.8" rx="1" fill="none" stroke="#ff0000" stroke-width="1.1"/>
<rect x="36.5" y="40.8" width="10.5" height="18" fill="none" stroke="#ff0000" stroke-width="1.1"/>
<rect x="71.5" y="40.8" width="10" height="18" fill="none" stroke="#ff0000" stroke-width="1.1"/>
<path d="M47 41q1-5 7-5h13q5 0 5 5v17q0 4.5-5 4.5H54q-7 0-7-4.5z" fill="none" stroke="#ff0000" stroke-width="1.1"/>
<path d="M54 36l-1-9M61 36l1-2" stroke="#ff0000" stroke-width="1"/>
<circle cx="69.6" cy="18.5" r="16" fill="#000" stroke="#ff0000" stroke-width="1.2"/>
<circle cx="69.6" cy="18.5" r="12" fill="none" stroke="#ff0000" stroke-width="1"/>
<circle cx="69.6" cy="18.5" r="4.5" fill="none" stroke="#ff0000" stroke-width="1.1"/>
<circle cx="69.6" cy="18.5" r="1.2" fill="#ff0000"/>
<path d="M69.6 6.5v7.5M69.6 23v7.5M57.6 18.5h7.5M74 18.5h7.5M61 10.5l4 4M74 22.5l4 4M61 26.5l4-4M78 10.5l-4 4" stroke="#ff0000" stroke-width="1"/>
<rect x="49" y="12" width="5.5" height="12.5" rx="1" fill="none" stroke="#ff0000" stroke-width="1.1"/>
<path d="M32.5 50.1H86" stroke="#5aa8d8" stroke-width="1.3"/></svg>
<div class="t" style="left:471.5px;top:85px;font-size:10.5px;letter-spacing:0px;color:#000">Zawór kulowy kołnie...</div>
<div class="a" style="left:583px;top:3px;width:112px;height:98px;border-top:1px solid #fff;border-left:1px solid #fff;border-right:1px solid #a0a0a0;border-bottom:1px solid #a0a0a0;background:#f4f4f4"></div>
<div class="a" style="left:586px;top:7px;width:105px;height:79px;background:#fff"></div>
<svg style="left:587px;top:8px;background:#000;overflow:hidden" width="103" height="77"><rect x="28" y="14.5" width="7" height="44.4" fill="none" stroke="#ff0000" stroke-width="1.1"/><path d="M28 37.3H35" stroke="#5aa8d8" stroke-width="1"/></svg>
<div class="t" style="left:587.5px;top:85px;font-size:10.5px;letter-spacing:0px;color:#000">Zawór z</div>
<div class="a" style="left:4px;top:106px;width:111px;height:96px;background:#0078d7"></div>
<div class="a" style="left:7px;top:109px;width:104px;height:78px;background:#fff"></div>
<svg style="left:7px;top:109px;background:#000;overflow:hidden" width="103" height="77"><circle cx="51.7" cy="19.3" r="13.6" fill="none" stroke="#ff0a3c" stroke-width="1.2"/>
<circle cx="51.7" cy="19.3" r="11" fill="none" stroke="#ff0a3c" stroke-width="1"/>
<path d="M51.7 19.5L42.5 14M51.7 19.5L61 14M51.7 19.5V7M49 21v11M54.5 21v11M40.5 17.5l2-1M63 17.5l-2-1" stroke="#ff0a3c" stroke-width="1"/>
<rect x="50" y="2.5" width="3.5" height="4" fill="none" stroke="#ff0a3c" stroke-width="0.9"/>
<rect x="48" y="32.5" width="7.5" height="4" fill="none" stroke="#ff0a3c" stroke-width="1.1"/>
<rect x="48" y="36" width="7.5" height="6" fill="#ff0a3c"/>
<path d="M49 42h5.5v26.5q0 1.8-2.75 1.8t-2.75-1.8z" fill="none" stroke="#ff0a3c" stroke-width="1.1"/>
<path d="M50.5 42v26M53 42v26" stroke="#ff0a3c" stroke-width="0.7"/>
<path d="M51.7 2.5V70" stroke="#5aa8d8" stroke-width="1" stroke-dasharray="16 2 2 2"/>
<path d="M38.5 20.5H47M56.5 20.5H65" stroke="#5aa8d8" stroke-width="1"/>
<path d="M49.7 56h4" stroke="#5aa8d8" stroke-width="0.9"/></svg>
<div class="t" style="left:7.5px;top:187px;font-size:10.5px;letter-spacing:0px;color:#fff">Zasuwa nożowa z tr...</div>
<div class="a" style="left:119px;top:104px;width:112px;height:98px;border-top:1px solid #fff;border-left:1px solid #fff;border-right:1px solid #a0a0a0;border-bottom:1px solid #a0a0a0;background:#f4f4f4"></div>
<div class="a" style="left:122px;top:108px;width:105px;height:79px;background:#fff"></div>
<svg style="left:123px;top:109px;background:#000;overflow:hidden" width="103" height="77"><g transform="translate(0,1)"><rect x="39.3" y="24" width="3.7" height="37" fill="none" stroke="#ff0a3c" stroke-width="1.1"/>
<rect x="68.6" y="24" width="3.7" height="37" fill="none" stroke="#ff0a3c" stroke-width="1.1"/>
<path d="M43.0 32H68.6M43.0 53H68.6" stroke="#ff0a3c" stroke-width="1.1"/>
<path d="M52 20.5V32M60 20.5V32M52 53v7h8v-7" fill="none" stroke="#ff0a3c" stroke-width="1.1"/>
<rect x="48" y="17.5" width="16" height="3" fill="none" stroke="#ff0a3c" stroke-width="1.1"/>
<path d="M56 12v5.5" stroke="#e080c0" stroke-width="2"/>
<path d="M53 32h6M53 53h6" stroke="#c89050" stroke-width="1"/>
<path d="M56.1 12V60M39.3 42.5H72.3" stroke="#5aa8d8" stroke-width="1.1"/></g></svg>
<div class="t" style="left:123.5px;top:187px;font-size:10.5px;letter-spacing:0px;color:#000">Przepustnica centry...</div>
<div class="a" style="left:235px;top:104px;width:112px;height:98px;border-top:1px solid #fff;border-left:1px solid #fff;border-right:1px solid #a0a0a0;border-bottom:1px solid #a0a0a0;background:#f4f4f4"></div>
<div class="a" style="left:238px;top:108px;width:105px;height:79px;background:#fff"></div>
<svg style="left:239px;top:109px;background:#000;overflow:hidden" width="103" height="77"><g transform="translate(0,1)"><rect x="33" y="35.6" width="4.5" height="32.5" fill="none" stroke="#ff0000" stroke-width="1.1"/>
<rect x="72.5" y="35.6" width="4.2" height="32.5" fill="none" stroke="#ff0000" stroke-width="1.1"/>
<rect x="42" y="3" width="25.8" height="4.5" rx="1.5" fill="none" stroke="#ff0000" stroke-width="1.1"/>
<path d="M52 7.5l-2 3M58.5 7.5l2 3" stroke="#ff0000"/>
<ellipse cx="55.2" cy="22.5" rx="7.5" ry="12" fill="none" stroke="#ff0000" stroke-width="1.1"/>
<ellipse cx="55.2" cy="22.5" rx="4.5" ry="10" fill="none" stroke="#ff0000" stroke-width="0.9"/>
<rect x="47" y="34.4" width="15.8" height="8" fill="none" stroke="#ff0000" stroke-width="1.1"/>
<path d="M47 39h15.8" stroke="#ff0000"/>
<path d="M37.5 45H47M37.5 58l12 7h8M47 42.5v10h4M62.8 42.5l9.7 4M57 60l15.5-5" fill="none" stroke="#ff0000" stroke-width="1.1"/>
<path d="M50 52.5q4 8 7 7.5" fill="none" stroke="#ff0000" stroke-width="1.1"/>
<path d="M37.5 44.5l10-0.5M57 63l15.5-2" stroke="#c89050" stroke-width="0.8"/>
<path d="M55.2 3V50M34 51.9H76" stroke="#5aa8d8" stroke-width="1" stroke-dasharray="6 2 2 2"/></g></svg>
<div class="t" style="left:238.5px;top:187px;font-size:10.5px;letter-spacing:-0.05px;width:104px;text-align:center;color:#000">Zawór odcinający</div>
<div class="a" style="left:351px;top:104px;width:112px;height:98px;border-top:1px solid #fff;border-left:1px solid #fff;border-right:1px solid #a0a0a0;border-bottom:1px solid #a0a0a0;background:#f4f4f4"></div>
<div class="a" style="left:354px;top:108px;width:105px;height:79px;background:#fff"></div>
<svg style="left:355px;top:109px;background:#000;overflow:hidden" width="103" height="77"><g transform="translate(0,1)"><rect x="27" y="36" width="5.5" height="25.5" fill="none" stroke="#ff0000" stroke-width="1.1"/>
<rect x="57.5" y="36" width="5.5" height="25.5" fill="none" stroke="#ff0000" stroke-width="1.1"/>
<rect x="32.5" y="42.5" width="5" height="12" fill="none" stroke="#ff0000" stroke-width="1.1"/>
<rect x="52.5" y="42.5" width="5" height="12" fill="none" stroke="#ff0000" stroke-width="1.1"/>
<rect x="37.5" y="38.5" width="15" height="20.5" fill="none" stroke="#ff0000" stroke-width="1.1"/>
<path d="M40 38.5V59M50 38.5V59M52 40h4M52 56h4" stroke="#ff0000" stroke-width="1"/>
<rect x="43" y="33" width="5" height="5.5" fill="none" stroke="#ff0000" stroke-width="1.1"/>
<path d="M43 33l2-2h3l3-4 4-3h23q1.5 1 0 2.5l-22 2-4 4.5" fill="none" stroke="#ff0000" stroke-width="1.1"/>
<path d="M28 46.5H62" stroke="#5aa8d8" stroke-width="1" stroke-dasharray="4 2"/></g></svg>
<div class="t" style="left:355.5px;top:187px;font-size:10.5px;letter-spacing:0px;color:#000">Zawór kulowy kołnie...</div>
<div class="a" style="left:467px;top:104px;width:112px;height:98px;border-top:1px solid #fff;border-left:1px solid #fff;border-right:1px solid #a0a0a0;border-bottom:1px solid #a0a0a0;background:#f4f4f4"></div>
<div class="a" style="left:470px;top:108px;width:105px;height:79px;background:#fff"></div>
<svg style="left:471px;top:109px;background:#000;overflow:hidden" width="103" height="77"><g transform="translate(0,1)"><rect x="38.2" y="10" width="16" height="17" rx="1.5" fill="none" stroke="#ff0000" stroke-width="1.1"/>
<path d="M54.2 11h13q3 0 3 3v8q0 3-3 3h-13" fill="none" stroke="#ff0000" stroke-width="1.1"/>
<path d="M63 9v14" stroke="#ff0000" stroke-width="2"/>
<rect x="43" y="27" width="10" height="12" fill="none" stroke="#ff0000" stroke-width="1.1"/>
<rect x="44" y="39" width="8.5" height="3" fill="none" stroke="#ff0000" stroke-width="1"/>
<rect x="46" y="42" width="4.5" height="10" fill="none" stroke="#ff0000" stroke-width="1"/>
<rect x="34.5" y="48.5" width="3" height="20" rx="1" fill="none" stroke="#ff0000" stroke-width="1.1"/>
<rect x="60" y="48.5" width="3" height="20" rx="1" fill="none" stroke="#ff0000" stroke-width="1.1"/>
<rect x="37.5" y="55" width="6" height="7.5" fill="none" stroke="#ff0000" stroke-width="1"/>
<rect x="55" y="55" width="5" height="7.5" fill="none" stroke="#ff0000" stroke-width="1"/>
<rect x="43.5" y="52" width="11.5" height="13" rx="2.5" fill="none" stroke="#ff0000" stroke-width="1.1"/>
<path d="M35 58.8H63" stroke="#5aa8d8" stroke-width="1"/></g></svg>
<div class="t" style="left:471.5px;top:187px;font-size:10.5px;letter-spacing:0px;color:#000">Zawór kołnierzowy z...</div>
<div class="a" style="left:583px;top:104px;width:112px;height:98px;border-top:1px solid #fff;border-left:1px solid #fff;border-right:1px solid #a0a0a0;border-bottom:1px solid #a0a0a0;background:#f4f4f4"></div>
<div class="a" style="left:586px;top:108px;width:105px;height:79px;background:#fff"></div>
<svg style="left:587px;top:109px;background:#000;overflow:hidden" width="103" height="77"><g transform="translate(0,1)"><rect x="29" y="21.8" width="7" height="41.9" fill="none" stroke="#ff0000" stroke-width="1.1"/><path d="M29 42.8H35" stroke="#5aa8d8" stroke-width="1"/></g></svg>
<div class="t" style="left:587.5px;top:187px;font-size:10.5px;letter-spacing:0px;color:#000">Zawór z</div>
</div>
<div class="a g" style="left:330px;top:283px;width:622px;height:16px"></div>
<div class="th" style="left:515px;top:283px;width:211px;height:14px;margin-top:0px"></div>
<svg style="left:335px;top:286px" width="7" height="10"><path d="M5.5 1L1.5 5L5.5 9" stroke="#606060" stroke-width="1.6" fill="none"/></svg>
<svg style="left:940px;top:286px" width="7" height="10"><path d="M1.5 1L5.5 5L1.5 9" stroke="#606060" stroke-width="1.6" fill="none"/></svg>
<div class="a" style="left:329px;top:302px;width:624px;height:204px;background:#fff;border-top:1px solid #a0a0a0;border-left:1px solid #a0a0a0;border-right:1px solid #fff;border-bottom:1px solid #fff"></div>
<div class="a" style="left:330px;top:303px;width:622px;height:202px;border-top:1px solid #696969;border-left:1px solid #696969;border-right:1px solid #e3e3e3;border-bottom:1px solid #e3e3e3"></div>
<div class="a" style="left:331px;top:304px;width:620px;height:200px;overflow:hidden">
<div class="t" style="left:5.2px;top:5px;font-size:11.5px;letter-spacing:0px;">Nazwa</div>
<div class="a" style="left:169px;top:3px;width:17px;height:18px;background:#f0f0f0;border-right:1px solid #a0a0a0;border-bottom:1px solid #a0a0a0"></div>
<svg style="left:173px;top:9px" width="9" height="5"><path d="M0.5 0.5h7l-3.5 4z" fill="#505050"/></svg>
<div class="a" style="left:189px;top:0px;width:1px;height:22px;background:#e4e4e4"></div>
<div class="t" style="left:195.2px;top:5px;font-size:11.5px;letter-spacing:0px;">L</div>
<div class="a" style="left:230px;top:3px;width:17px;height:18px;background:#f0f0f0;border-right:1px solid #a0a0a0;border-bottom:1px solid #a0a0a0"></div>
<svg style="left:234px;top:9px" width="9" height="5"><path d="M0.5 0.5h7l-3.5 4z" fill="#505050"/></svg>
<div class="a" style="left:251px;top:0px;width:1px;height:22px;background:#e4e4e4"></div>
<div class="t" style="left:256.2px;top:5px;font-size:11.5px;letter-spacing:0px;">PN</div>
<div class="a" style="left:298px;top:3px;width:17px;height:18px;background:#f0f0f0;border-right:1px solid #a0a0a0;border-bottom:1px solid #a0a0a0"></div>
<svg style="left:302px;top:9px" width="9" height="5"><path d="M0.5 0.5h7l-3.5 4z" fill="#505050"/></svg>
<div class="a" style="left:320px;top:0px;width:1px;height:22px;background:#e4e4e4"></div>
<div class="t" style="left:325.2px;top:5px;font-size:11.5px;letter-spacing:0px;">Producent</div>
<div class="a" style="left:381px;top:3px;width:17px;height:18px;background:#f0f0f0;border-right:1px solid #a0a0a0;border-bottom:1px solid #a0a0a0"></div>
<svg style="left:385px;top:9px" width="9" height="5"><path d="M0.5 0.5h7l-3.5 4z" fill="#505050"/></svg>
<div class="a" style="left:403px;top:0px;width:1px;height:22px;background:#e4e4e4"></div>
<div class="a" style="left:57px;top:160px;width:600px;height:17px;background:#efefef"></div>
<div class="a" style="left:10.0px;top:38.0px;width:1px;height:110.0px;background:repeating-linear-gradient(#a8a8a8 0 1px,transparent 1px 2px)"></div>
<div class="a" style="left:29.0px;top:39.0px;width:1px;height:97.0px;background:repeating-linear-gradient(#a8a8a8 0 1px,transparent 1px 2px)"></div>
<div class="a" style="left:29.0px;top:158.0px;width:1px;height:8.0px;background:repeating-linear-gradient(#a8a8a8 0 1px,transparent 1px 2px)"></div>
<div class="a" style="left:15.0px;top:33.0px;width:6.0px;height:1px;background:repeating-linear-gradient(90deg,#a8a8a8 0 1px,transparent 1px 2px)"></div>
<svg style="left:6.0px;top:29.0px" width="9" height="9"><rect x="0.5" y="0.5" width="8" height="8" fill="#f6f6fa" stroke="#a8aab0"/><path d="M2 4.5h5" stroke="#4a5fb0" stroke-width="1"/></svg>
<svg style="left:20.0px;top:26.0px" width="15" height="12"><path d="M0.5 1.5h4.5l1.2 1.3h7.3v8.2h-13z" fill="url(#fg)" stroke="#b88a1c" stroke-width="0.8"/><path d="M1 3.3h12.5" stroke="#fff8d8" stroke-width="0.8"/></svg>
<div class="t" style="left:40.2px;top:25px;font-size:11.5px;letter-spacing:0px;">PN 10</div>
<div class="a" style="left:30.0px;top:50.0px;width:11.0px;height:1px;background:repeating-linear-gradient(90deg,#a8a8a8 0 1px,transparent 1px 2px)"></div>
<div class="a" style="left:41px;top:42px;width:10px;height:12px;border:1px solid #a83838;background:#fff"></div>
<div class="t" style="left:58.2px;top:42px;font-size:11.5px;letter-spacing:0px;">DN 500</div>
<div class="t" style="left:226.8px;top:42px;font-size:11.5px;letter-spacing:0px;">114</div>
<div class="t" style="left:261.2px;top:42px;font-size:11.5px;letter-spacing:0px;">PN10</div>
<div class="a" style="left:30.0px;top:67.0px;width:11.0px;height:1px;background:repeating-linear-gradient(90deg,#a8a8a8 0 1px,transparent 1px 2px)"></div>
<div class="a" style="left:41px;top:60px;width:10px;height:12px;border:1px solid #a83838;background:#fff"></div>
<div class="t" style="left:58.2px;top:59px;font-size:11.5px;letter-spacing:0px;">DN 600</div>
<div class="t" style="left:226.8px;top:59px;font-size:11.5px;letter-spacing:0px;">114</div>
<div class="t" style="left:261.2px;top:59px;font-size:11.5px;letter-spacing:0px;">PN10</div>
<div class="a" style="left:30.0px;top:84.0px;width:11.0px;height:1px;background:repeating-linear-gradient(90deg,#a8a8a8 0 1px,transparent 1px 2px)"></div>
<div class="a" style="left:41px;top:77px;width:10px;height:12px;border:1px solid #a83838;background:#fff"></div>
<div class="t" style="left:58.2px;top:76px;font-size:11.5px;letter-spacing:0px;">DN 700</div>
<div class="t" style="left:226.8px;top:76px;font-size:11.5px;letter-spacing:0px;">165</div>
<div class="t" style="left:261.2px;top:76px;font-size:11.5px;letter-spacing:0px;">PN10</div>
<div class="a" style="left:30.0px;top:102.0px;width:11.0px;height:1px;background:repeating-linear-gradient(90deg,#a8a8a8 0 1px,transparent 1px 2px)"></div>
<div class="a" style="left:41px;top:94px;width:10px;height:12px;border:1px solid #a83838;background:#fff"></div>
<div class="t" style="left:58.2px;top:93px;font-size:11.5px;letter-spacing:0px;">DN 800</div>
<div class="t" style="left:226.8px;top:93px;font-size:11.5px;letter-spacing:0px;">190</div>
<div class="t" style="left:261.2px;top:93px;font-size:11.5px;letter-spacing:0px;">PN10</div>
<div class="a" style="left:30.0px;top:119.0px;width:11.0px;height:1px;background:repeating-linear-gradient(90deg,#a8a8a8 0 1px,transparent 1px 2px)"></div>
<div class="a" style="left:41px;top:111px;width:10px;height:12px;border:1px solid #a83838;background:#fff"></div>
<div class="t" style="left:58.2px;top:110px;font-size:11.5px;letter-spacing:0px;">DN 900</div>
<div class="t" style="left:226.8px;top:110px;font-size:11.5px;letter-spacing:0px;">203</div>
<div class="t" style="left:261.2px;top:110px;font-size:11.5px;letter-spacing:0px;">PN10</div>
<div class="a" style="left:30.0px;top:136.0px;width:11.0px;height:1px;background:repeating-linear-gradient(90deg,#a8a8a8 0 1px,transparent 1px 2px)"></div>
<div class="a" style="left:41px;top:128px;width:10px;height:12px;border:1px solid #a83838;background:#fff"></div>
<div class="t" style="left:58.2px;top:128px;font-size:11.5px;letter-spacing:0px;">DN 1000</div>
<div class="t" style="left:226.8px;top:128px;font-size:11.5px;letter-spacing:0px;">216</div>
<div class="t" style="left:261.2px;top:128px;font-size:11.5px;letter-spacing:0px;">PN10</div>
<svg style="left:6.0px;top:149.0px" width="9" height="9"><rect x="0.5" y="0.5" width="8" height="8" fill="#f6f6fa" stroke="#a8aab0"/><path d="M2 4.5h5" stroke="#4a5fb0" stroke-width="1"/></svg>
<div class="a" style="left:15.0px;top:153.0px;width:6.0px;height:1px;background:repeating-linear-gradient(90deg,#a8a8a8 0 1px,transparent 1px 2px)"></div>
<svg style="left:20.0px;top:146.0px" width="15" height="12"><path d="M0.5 1.5h4.5l1.2 1.3h7.3v8.2h-13z" fill="url(#fg)" stroke="#b88a1c" stroke-width="0.8"/><path d="M1 3.3h12.5" stroke="#fff8d8" stroke-width="0.8"/></svg>
<div class="t" style="left:40.2px;top:145px;font-size:11.5px;letter-spacing:0px;">Jafar</div>
<div class="a" style="left:33.0px;top:170.0px;width:6.0px;height:1px;background:repeating-linear-gradient(90deg,#a8a8a8 0 1px,transparent 1px 2px)"></div>
<svg style="left:24.0px;top:166.0px" width="9" height="9"><rect x="0.5" y="0.5" width="8" height="8" fill="#f6f6fa" stroke="#a8aab0"/><path d="M2 4.5h5" stroke="#4a5fb0" stroke-width="1"/><path d="M4.5 2v5" stroke="#4a5fb0" stroke-width="1"/></svg>
<svg style="left:38.0px;top:163.0px" width="16" height="12"><path d="M0.5 1.5h4.5l1.2 1.3h6.3v2.5h-12z" fill="#f6dc80" stroke="#b88a1c" stroke-width="0.8"/><path d="M0.5 11l3-6h12l-3 6z" fill="url(#fg)" stroke="#b88a1c" stroke-width="0.8"/></svg>
<div class="t" style="left:58.2px;top:162px;font-size:11.5px;letter-spacing:0px;">PN 10</div>
</div>
<div class="a" style="left:13px;top:516px;width:13px;height:13px;background:#fff;border:1px solid #333"></div>
<div class="t" style="left:28.0px;top:516px;font-size:10.5px;letter-spacing:-0.16px;">Sortuj</div>
<div class="a" style="left:11px;top:534px;width:360px;height:247px;background:#fff"></div>
<svg style="left:12px;top:535px;background:#000" width="358" height="245">
<g fill="none" stroke="#e8103c" stroke-width="1.1">
<rect x="174.5" y="8.299999999999955" width="9.3" height="45.2"/>
<path d="M174.0 53.5L172.0 60.5L188.5 60.5L184.0 53.5"/>
<path d="M171.0 62.0L188.0 62.0"/>
<rect x="131" y="18.299999999999955" width="6.2" height="84.4" rx="2.5"/>
<path d="M137.0 31.0L142.3 58.0M137.0 92.0L142.3 64.0"/>
<rect x="146.5" y="56.39999999999998" width="25" height="7.9"/>
<rect x="159.3" y="62.200000000000045" width="39.4" height="56.5"/>
<path d="M146.9 118.7L146.9 71.2L159.3 71.2M198.7 71.2L210.4 71.2L210.4 118.7"/>
<rect x="140.2" y="113.70000000000005" width="77.2" height="5"/>
<path d="M153.5 113.7L153.5 118.7M204.5 113.7L204.5 118.7"/>
<path d="M145.4 118.7L145.4 155.0M212.9 118.7L212.9 155.0"/>
<circle cx="178.6" cy="175.79999999999995" r="38.6" stroke-width="1.2"/>
<circle cx="178.6" cy="175.79999999999995" r="34.7"/>
<rect x="166.2" y="212.5" width="25.9" height="6.2"/>
</g>
<circle cx="178.6" cy="175.79999999999995" r="41.5" fill="none" stroke="#5a9ac0" stroke-width="0.9" stroke-dasharray="3 2"/>
<circle cx="219.6" cy="182.3" r="1.8" fill="#000" stroke="#e0b080" stroke-width="0.9"/><circle cx="219.6" cy="182.3" r="0.8" fill="#80c0e0"/><circle cx="215.6" cy="194.6" r="1.8" fill="#000" stroke="#e0b080" stroke-width="0.9"/><circle cx="215.6" cy="194.6" r="0.8" fill="#80c0e0"/><circle cx="207.9" cy="205.1" r="1.8" fill="#000" stroke="#e0b080" stroke-width="0.9"/><circle cx="207.9" cy="205.1" r="0.8" fill="#80c0e0"/><circle cx="197.4" cy="212.8" r="1.8" fill="#000" stroke="#e0b080" stroke-width="0.9"/><circle cx="197.4" cy="212.8" r="0.8" fill="#80c0e0"/><circle cx="185.1" cy="216.8" r="1.8" fill="#000" stroke="#e0b080" stroke-width="0.9"/><circle cx="185.1" cy="216.8" r="0.8" fill="#80c0e0"/><circle cx="172.1" cy="216.8" r="1.8" fill="#000" stroke="#e0b080" stroke-width="0.9"/><circle cx="172.1" cy="216.8" r="0.8" fill="#80c0e0"/><circle cx="159.8" cy="212.8" r="1.8" fill="#000" stroke="#e0b080" stroke-width="0.9"/><circle cx="159.8" cy="212.8" r="0.8" fill="#80c0e0"/><circle cx="149.3" cy="205.1" r="1.8" fill="#000" stroke="#e0b080" stroke-width="0.9"/><circle cx="149.3" cy="205.1" r="0.8" fill="#80c0e0"/><circle cx="141.6" cy="194.6" r="1.8" fill="#000" stroke="#e0b080" stroke-width="0.9"/><circle cx="141.6" cy="194.6" r="0.8" fill="#80c0e0"/><circle cx="137.6" cy="182.3" r="1.8" fill="#000" stroke="#e0b080" stroke-width="0.9"/><circle cx="137.6" cy="182.3" r="0.8" fill="#80c0e0"/><circle cx="137.6" cy="169.3" r="1.8" fill="#000" stroke="#e0b080" stroke-width="0.9"/><circle cx="137.6" cy="169.3" r="0.8" fill="#80c0e0"/><circle cx="141.6" cy="157.0" r="1.8" fill="#000" stroke="#e0b080" stroke-width="0.9"/><circle cx="141.6" cy="157.0" r="0.8" fill="#80c0e0"/><circle cx="149.3" cy="146.5" r="1.8" fill="#000" stroke="#e0b080" stroke-width="0.9"/><circle cx="149.3" cy="146.5" r="0.8" fill="#80c0e0"/><circle cx="159.8" cy="138.8" r="1.8" fill="#000" stroke="#e0b080" stroke-width="0.9"/><circle cx="159.8" cy="138.8" r="0.8" fill="#80c0e0"/><circle cx="172.1" cy="134.8" r="1.8" fill="#000" stroke="#e0b080" stroke-width="0.9"/><circle cx="172.1" cy="134.8" r="0.8" fill="#80c0e0"/><circle cx="185.1" cy="134.8" r="1.8" fill="#000" stroke="#e0b080" stroke-width="0.9"/><circle cx="185.1" cy="134.8" r="0.8" fill="#80c0e0"/><circle cx="197.4" cy="138.8" r="1.8" fill="#000" stroke="#e0b080" stroke-width="0.9"/><circle cx="197.4" cy="138.8" r="0.8" fill="#80c0e0"/><circle cx="207.9" cy="146.5" r="1.8" fill="#000" stroke="#e0b080" stroke-width="0.9"/><circle cx="207.9" cy="146.5" r="0.8" fill="#80c0e0"/><circle cx="215.6" cy="157.0" r="1.8" fill="#000" stroke="#e0b080" stroke-width="0.9"/><circle cx="215.6" cy="157.0" r="0.8" fill="#80c0e0"/><circle cx="219.6" cy="169.3" r="1.8" fill="#000" stroke="#e0b080" stroke-width="0.9"/><circle cx="219.6" cy="169.3" r="0.8" fill="#80c0e0"/>
<path d="M178.6 8.0L178.6 222.0M131.0 60.8L170.0 60.8M140.2 175.8L217.0 175.8" stroke="#6ab0d0" stroke-width="1" stroke-dasharray="10 3 2 3" fill="none"/>
<path d="M159.3 71.2L198.7 71.2" stroke="#c070c0" stroke-width="1" stroke-dasharray="5 3"/>
<g stroke="#00c000" stroke-width="1" fill="none">
<path d="M112.2 17.6L112.2 103.7M108.5 15.0L116.0 21.0M108.5 101.0L116.0 107.0M108.0 17.6L116.5 17.6M108.0 103.7L116.5 103.7"/>
<path d="M243.4 6.2L243.4 175.8M239.5 3.5L247.0 9.0M239.5 173.0L247.0 178.5M239.0 6.2L247.5 6.2M239.0 175.8L247.5 175.8"/>
<path d="M112.2 139.9L112.2 210.4M108.5 137.0L116.0 143.0M108.5 207.5L116.0 213.5M108.0 139.9L116.5 139.9M108.0 210.4L116.5 210.4"/>
<path d="M137.1 235.3L221.2 235.3M134.0 239.0L140.0 231.5M218.0 239.0L224.0 231.5M137.1 231.0L137.1 239.5M221.2 231.0L221.2 239.5"/>
<path d="M198.8 229.8L257.3 199.5M199.0 233.0L205.0 224.5M203.0 232.0L209.0 223.5"/>
</g>
<g fill="#00c000" font-family="Liberation Sans" font-size="13">
<path d="M110.2 68.5L99.8 68.5L99.8 64.5Q99.8 61.5 103.0 61.5L107.0 61.5Q110.2 61.5 110.2 64.5Z M99.8 60.0L110.2 60.0M99.8 53.0L105.5 60.0M104.0 58.0L110.2 53.0 M229.5 95.5L240.9 95.5M229.5 88.0L240.9 88.0M235.2 95.5L235.2 88.0 M110.2 179.3L99.8 179.3L99.8 175.3Q99.8 172.0 103.0 172.0L107.0 172.0Q110.2 172.0 110.2 175.3Z M175.8 224.0L175.8 233.0M181.7 224.0L175.8 229.8M177.8 227.8L181.7 233.0" fill="none" stroke="#00c000" stroke-width="1"/>
<text transform="translate(214,217.5) rotate(-27.4) skewX(-12)" font-size="10" textLength="50" lengthAdjust="spacingAndGlyphs" fill="#30e030">DO x 8iK1</text>
</g>
</svg>
<div class="t" style="left:174.8px;top:781px;font-size:10px;letter-spacing:-0.1px;">DN 500</div>
<div class="a" style="left:381px;top:520px;width:579px;height:228px;border:1px solid #dcdcdc;box-shadow:inset 1px 1px 0 #fff"></div>
<div class="t" style="left:387.5px;top:514px;font-size:10.5px;letter-spacing:-0.16px;background:#f0f0f0">&nbsp;Widok i punkt wstawienia&nbsp;</div>
<div class="t" style="left:392.2px;top:539px;font-size:10.5px;letter-spacing:-0.16px;">Punkt wstawienia</div>
<div class="a" style="left:509px;top:537px;width:69px;height:20px;background:#e1e1e1;border:1px solid #adadad"></div>
<div class="t" style="left:512.0px;top:540px;font-size:10.5px;letter-spacing:-0.16px;">Punkt 1</div>
<svg style="left:563px;top:544px" width="10" height="6"><path d="M0.7 0.7L4.8 4.8L8.9 0.7" stroke="#404040" stroke-width="1.1" fill="none"/></svg>
<div class="a" style="left:636px;top:540px;width:13px;height:13px;background:#fff;border:1px solid #333"></div>
<div class="t" style="left:651.0px;top:540px;font-size:10.5px;letter-spacing:-0.16px;">System</div>
<div class="a" style="left:773px;top:536px;width:170px;height:20px;background:#fff;border:2px solid #c8c8c8"></div>
<div class="a" style="left:777px;top:540px;width:13px;height:13px;background:#ff003c;border:1px solid #202020"></div>
<div class="t" style="left:791.7px;top:540px;font-size:10.5px;letter-spacing:-0.3px;">Zasilanie</div>
<div class="a" style="left:928px;top:539px;width:13px;height:14px;background:linear-gradient(#d4e0ff,#a8c0f8);border-radius:1px"></div>
<svg style="left:930px;top:543px" width="9" height="6"><path d="M1 1L4.5 4.5L8 1" stroke="#2a3a6a" stroke-width="1.7" fill="none"/></svg>
<svg style="left:392px;top:567.5px" width="13" height="13"><circle cx="6.5" cy="6.5" r="5.6" fill="#fff" stroke="#333" stroke-width="1"/></svg>
<div class="t" style="left:408.1px;top:567px;font-size:10.5px;letter-spacing:-0.25px;">Widok 1</div>
<svg style="left:392px;top:591.0px" width="13" height="13"><circle cx="6.5" cy="6.5" r="5.6" fill="#fff" stroke="#333" stroke-width="1"/></svg>
<div class="t" style="left:408.1px;top:591px;font-size:10.5px;letter-spacing:-0.25px;">Widok 2</div>
<svg style="left:392px;top:615.8px" width="13" height="13"><circle cx="6.5" cy="6.5" r="5.6" fill="#fff" stroke="#333" stroke-width="1"/><circle cx="6.5" cy="6.5" r="3.3" fill="#222"/></svg>
<div class="t" style="left:408.1px;top:615px;font-size:10.5px;letter-spacing:-0.25px;">Widok 3</div>
<svg style="left:392px;top:640.7px" width="13" height="13"><circle cx="6.5" cy="6.5" r="5.6" fill="#fff" stroke="#333" stroke-width="1"/></svg>
<div class="t" style="left:408.1px;top:640px;font-size:10.5px;letter-spacing:-0.25px;">Schemat</div>
<svg style="left:392px;top:664.8px" width="13" height="13"><circle cx="6.5" cy="6.5" r="5.6" fill="#fff" stroke="#333" stroke-width="1"/></svg>
<div class="t" style="left:408.1px;top:664px;font-size:10.5px;letter-spacing:-0.25px;">Symbol</div>
<div class="a" style="left:407px;top:615px;width:38px;height:15px;border:1px dotted #505050"></div>
<div class="t" style="left:636.0px;top:637px;font-size:10.5px;letter-spacing:-0.16px;">Typ</div>
<div class="a" style="left:775px;top:634px;width:167px;height:21px;background:#fff;border:1px solid #7a7a7a"></div>
<div class="t" style="left:780.0px;top:637px;font-size:10.5px;letter-spacing:-0.16px;">DN 500</div>
<div class="t" style="left:636.0px;top:660px;font-size:10.5px;letter-spacing:-0.16px;">Typoszereg</div>
<div class="a" style="left:775px;top:658px;width:167px;height:21px;background:#fff;border:1px solid #7a7a7a"></div>
<div class="t" style="left:636.0px;top:685px;font-size:10.5px;letter-spacing:-0.16px;">Producent</div>
<div class="a" style="left:775px;top:683px;width:167px;height:21px;background:#fff;border:1px solid #7a7a7a"></div>
<div class="t" style="left:636.0px;top:710px;font-size:10.5px;letter-spacing:-0.16px;">Nr katalogowy</div>
<div class="a" style="left:775px;top:707px;width:167px;height:21px;background:#fff;border:1px solid #7a7a7a"></div>
<div class="a" style="left:786px;top:732px;width:13px;height:13px;background:#fff;border:1px solid #333"></div>
<div class="t" style="left:801.2px;top:732px;font-size:10.5px;letter-spacing:-0.16px;">Powtarzaj polecenie</div>
<div class="t" style="left:404.1px;top:756px;font-size:10.5px;letter-spacing:-0.13px;">Aktualna jednostka: milimetry</div>
<div class="a" style="left:618px;top:753px;width:133px;height:30px;background:#f0f0f0;border-top:1px solid #fff;border-left:1px solid #fff;border-right:1px solid #a0a0a0;border-bottom:1px solid #a0a0a0;box-shadow:1px 1px 0 #e0e0e0"></div>
<svg style="left:0;top:0" width="1" height="1"><rect x="624.8" y="764.2" width="11" height="9.5" rx="0.8" fill="#fff" stroke="#3a3a3a" stroke-width="1"/><path d="M625.5 765h10" stroke="#3a3a3a" stroke-width="1.2"/><path d="M627 766.5l1 1.5 1-1.5z" fill="#333"/><path d="M627.5 769.3v0.9M627.5 771.5v0.9M629.5 769.8h4M629.5 772h4" stroke="#555" stroke-width="0.9"/><path d="M629 764.5l3.6-3.4h5.2l0.3 3.2-2.2 2.7-2.4 0.2z" fill="#d8d8d8" stroke="#6a6a6a" stroke-width="0.8"/><path d="M631 763.5l3 3M632.5 762l3 3" stroke="#8a8a8a" stroke-width="0.7"/><path d="M638.3 761h1.9v6.3l-1.9-1.5z" fill="#3a3ac0"/></svg>
<div class="t" style="left:669.8px;top:761px;font-size:10.5px;letter-spacing:-0.15px;">Styl obiektu</div>
<div class="a" style="left:784px;top:752px;width:139px;height:31px;background:#f0f0f0;border:1px solid #adadad"></div>
<div class="t" style="left:857.2px;top:762px;font-size:12px;letter-spacing:0px;color:#838383">OK</div>
<div class="a" style="left:925px;top:752px;width:29px;height:31px;background:#f0f0f0;border-top:1px solid #fff;border-left:1px solid #fff;border-right:1px solid #a0a0a0;border-bottom:1px solid #a0a0a0"></div>
<div class="a" style="left:938px;top:761px;width:3px;height:3px;background:#222"></div>
<div class="a" style="left:938px;top:766px;width:3px;height:3px;background:#222"></div>
<div class="a" style="left:938px;top:772px;width:3px;height:3px;background:#222"></div>
<div class="a" style="left:958px;top:787px;width:2px;height:2px;background:#b8b8b8"></div>
<div class="a" style="left:958px;top:790px;width:2px;height:2px;background:#b8b8b8"></div>
<div class="a" style="left:958px;top:793px;width:2px;height:2px;background:#b8b8b8"></div>
<div class="a" style="left:955px;top:790px;width:2px;height:2px;background:#b8b8b8"></div>
<div class="a" style="left:955px;top:793px;width:2px;height:2px;background:#b8b8b8"></div>
<div class="a" style="left:952px;top:793px;width:2px;height:2px;background:#b8b8b8"></div>
</body></html>
